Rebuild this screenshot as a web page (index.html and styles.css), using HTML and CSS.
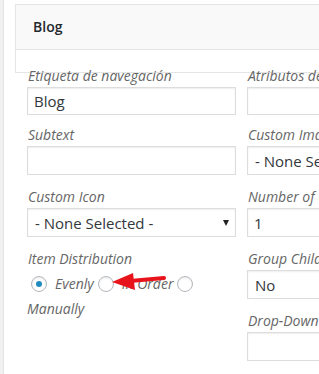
FILE: index.html
```html
<!DOCTYPE html>
<html>
	<head>
		<meta charset="UTF-8">
		<title>Blog</title>
		<link rel="stylesheet" href="styles.css">
	</head>
	<body>
		<div class="page">
			<div class="panel">
				<div class="panel-head">Blog</div>
				<div class="panel-strip"></div>
			</div>
			<div class="form">
				<div class="col">
					<div class="field field-title">
						<label>Etiqueta de navegación</label>
						<input type="text" value="Blog">
					</div>
					<div class="field">
						<label>Subtext</label>
						<input type="text" value="">
					</div>
					<div class="field">
						<label>Custom Icon</label>
						<div class="select select-arrow">
							<select><option>- None Selected -</option></select>
						</div>
					</div>
					<div class="field">
						<label>Item Distribution</label>
						<div class="radios">
							<input type="radio" name="dist" checked>
							<span class="radio-text">Evenly</span>
							<input type="radio" name="dist">
							<span class="radio-text">In Order</span>
							<input type="radio" name="dist">
							<span class="radio-text">Manually</span>
							<svg class="pointer" width="54" height="20" viewBox="0 0 54 20">
								<line x1="18" y1="10" x2="52" y2="7" stroke="#e8141b" stroke-width="4" stroke-linecap="round"/>
								<polygon points="0,11 21,2 23,19" fill="#e8141b"/>
							</svg>
						</div>
					</div>
				</div>
				<div class="col">
					<div class="field field-title">
						<label>Atributos del título</label>
						<input type="text" value="">
					</div>
					<div class="field">
						<label>Custom Image</label>
						<div class="select">
							<select><option>- None Selected -</option></select>
						</div>
					</div>
					<div class="field">
						<label>Number of Columns</label>
						<input type="text" value="1">
					</div>
					<div class="field">
						<label>Group Children</label>
						<div class="select">
							<select><option>No</option></select>
						</div>
					</div>
					<div class="field">
						<label>Drop-Down Width</label>
						<input type="text" value="">
					</div>
				</div>
			</div>
		</div>
	</body>
</html>
```
FILE: styles.css
```css
html,body{
	margin: 0;
	padding: 0;
	overflow: hidden;
}
body{
	background: #f1f1f1;
	font-family: "Open Sans", "Noto Sans", sans-serif;
	color: #32373c;
}
.page{
	margin-left: 3px;
	border-left: 1px solid #e2e4e7;
	background: #fff;
	min-height: 374px;
	padding-left: 11px;
	overflow: hidden;
}
.panel{
	width: 560px;
	margin-top: 4px;
	border: 1px solid #e5e5e5;
}
.panel-head{
	height: 44px;
	line-height: 44px;
	padding-left: 17px;
	background: #f9f9f9;
	border-bottom: 1px solid #e5e5e5;
	font-size: 14px;
	font-weight: 600;
	color: #23282d;
}
.panel-strip{
	height: 22px;
}
.form{
	display: flex;
	gap: 11px;
	margin-top: -6px;
	padding-left: 12px;
}
.col{
	flex-shrink: 0;
	width: 209px;
}
.field{
	margin-bottom: 13px;
}
.field label{
	display: block;
	margin-bottom: 2px;
	padding-left: 1px;
	font-size: 14px;
	line-height: 18px;
	font-style: italic;
	color: #666;
	white-space: nowrap;
}
.field input[type=text],
.select select{
	display: block;
	box-sizing: border-box;
	width: 100%;
	height: 29px;
	margin: 0;
	padding: 0 6px;
	border: 1px solid #ddd;
	box-shadow: inset 0 1px 2px rgba(0,0,0,.07);
	background: #fff;
	font-family: inherit;
	font-size: 15px;
	color: #32373c;
	outline: none;
}
.field-title{
	margin-bottom: 11px;
}
.field-title input[type=text]{
	height: 28px;
}
.select{
	position: relative;
}
.select select{
	-webkit-appearance: none;
	appearance: none;
	padding: 0 7px;
	border-radius: 0;
}
.select-arrow:after{
	content: "";
	position: absolute;
	right: 7px;
	top: 12px;
	border-left: 3px solid transparent;
	border-right: 3px solid transparent;
	border-top: 6px solid #222;
}
.radios{
	position: relative;
	display: flex;
	flex-wrap: wrap;
	align-items: center;
	row-gap: 5px;
	padding-top: 4px;
}
.radios input[type=radio]{
	-webkit-appearance: none;
	appearance: none;
	box-sizing: border-box;
	width: 16px;
	height: 16px;
	margin: 0 8px 0 4px;
	border: 1px solid #b4b9be;
	border-radius: 50%;
	background: #fff;
	box-shadow: inset 0 1px 2px rgba(0,0,0,.1);
	display: flex;
	align-items: center;
	justify-content: center;
}
.radios input[type=radio]:checked:before{
	content: "";
	width: 6px;
	height: 6px;
	border-radius: 50%;
	background: #1e8cbe;
}
.radio-text{
	font-size: 14px;
	line-height: 20px;
	font-style: italic;
	color: #666;
}
.pointer{
	position: absolute;
	left: 85px;
	top: 1px;
}
```
